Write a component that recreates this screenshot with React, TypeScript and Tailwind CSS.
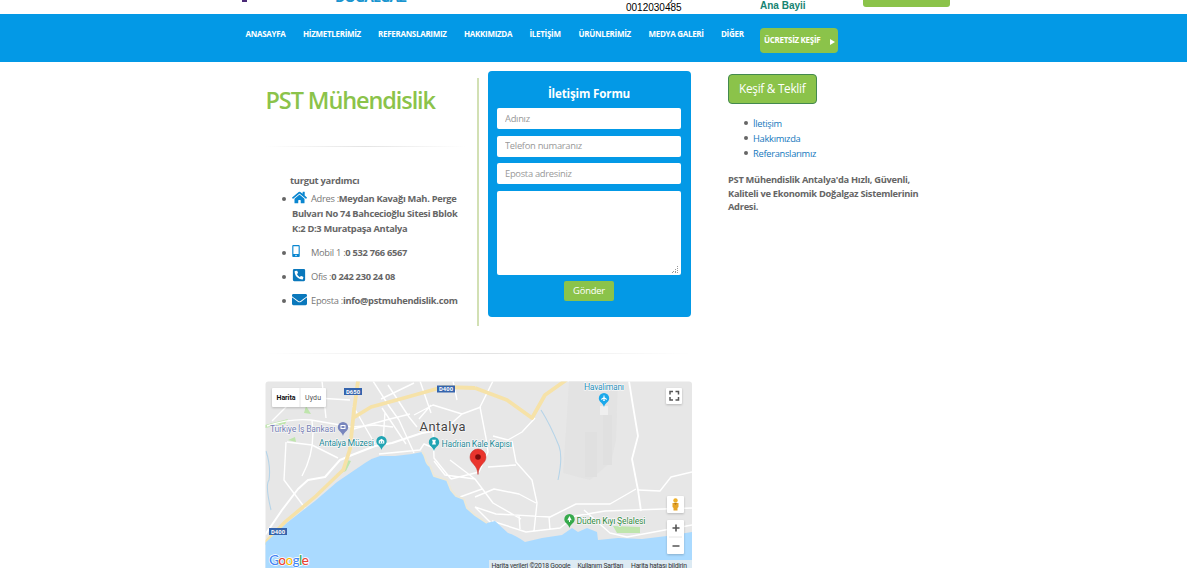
import React from "react";
import { FaHome, FaMobileAlt, FaPhoneSquareAlt, FaEnvelope } from "react-icons/fa";

const navItems = [
  { label: "ANASAYFA", cls: "w-[57.5px]" },
  { label: "HİZMETLERİMİZ", cls: "w-[75px]" },
  { label: "REFERANSLARIMIZ", cls: "w-[86px]" },
  { label: "HAKKIMIZDA", cls: "w-[65.5px]" },
  { label: "İLETİŞİM", cls: "w-[49px]" },
  { label: "ÜRÜNLERİMİZ", cls: "w-[70px]" },
  { label: "MEDYA GALERİ", cls: "w-[72.5px]" },
  { label: "DİĞER", cls: "w-[39px]" },
];

function TopStrip() {
  return (
    <div className="relative h-[14px] overflow-hidden bg-white">
      <div className="absolute left-[242px] top-0 h-[2px] w-[5px] bg-[#4b2a77]" />
      <div className="absolute left-[335px] top-[-11px] text-[14px] font-bold leading-[16px] tracking-[-0.8px] text-[#1a95cf]">
        DOĞALGAZ
      </div>
      <div className="absolute left-[598px] top-[-11px] font-['Liberation_Sans',sans-serif] text-[10px] leading-[12px] text-[#666]">(</div>
      <div className="absolute left-[669px] top-[-8px] font-['Liberation_Sans',sans-serif] text-[10px] leading-[12px] text-[#222]">y</div>
      <div className="absolute left-[626px] top-[1px] font-['Liberation_Sans',sans-serif] text-[10px] leading-[13px] text-black">
        0012030485
      </div>
      <div className="absolute left-[760px] top-[-1px] font-['Liberation_Sans',sans-serif] text-[10px] font-bold leading-[13px] text-[#168472]">
        Ana Bayii
      </div>
      <div className="absolute left-[863px] top-[-10px] h-[17px] w-[87px] rounded-[3px] bg-[#8bc34a]" />
    </div>
  );
}

function NavBar() {
  return (
    <nav className="flex h-[48px] w-[1187px] items-start bg-[#0399e6] pl-[245.5px] text-[8px] font-bold tracking-[-0.3px] text-white">
      {navItems.map((n) => (
        <a key={n.label} className={"shrink-0 whitespace-nowrap pt-[14px] leading-[12px] " + n.cls}>
          {n.label}
        </a>
      ))}
      <a className="mt-[14px] flex h-[24.5px] w-[78px] shrink-0 items-center rounded-[4px] bg-[#8bc34a] pl-[4px]">
        <span className="w-[65.5px] whitespace-nowrap">ÜCRETSİZ KEŞİF</span>
        <svg width="5" height="6" viewBox="0 0 5 6" className="mt-[3px] fill-white">
          <path d="M0 0 5 3 0 6Z" />
        </svg>
      </a>
    </nav>
  );
}

function Row({ children }: { children: React.ReactNode }) {
  return (
    <li className="relative mb-[9px] min-h-[15px] whitespace-nowrap leading-[15px]">
      <span className="absolute left-[-10px] top-[6px] size-[4px] rounded-full bg-[#666]" />
      {children}
    </li>
  );
}

function Contact() {
  return (
    <section className="mt-[16px] h-[248px] w-[214px] shrink-0 border-r-2 border-[#d2e0b4]">
      <h1 className="pl-[0.5px] pt-[6px] text-[23.5px] font-semibold leading-[32px] tracking-[-1.1px] text-[#8bc34a]">
        <span className="whitespace-nowrap">PST Mühendislik</span>
      </h1>
      <div className="mt-[29.5px] h-px w-[200px] bg-linear-to-r from-transparent via-[#e4e4e4] to-transparent" />
      <div className="ml-[25px] mt-[27.5px] text-[9.4px] font-bold leading-[14px] tracking-[-0.27px] text-[#666]">turgut yardımcı</div>
      <ul className="ml-[27px] mt-[3px] text-[9.3px] tracking-[-0.29px] text-[#777]">
        <Row>
          <FaHome className="mr-[4px] mt-[-5px] inline-block size-[15px] text-[#0a86d0]" />
          Adres :<b className="text-[#666]">Meydan Kavağı Mah. Perge<br />Bulvarı No 74 Bahcecioğlu Sitesi Bblok<br />K:2 D:3 Muratpaşa Antalya</b>
        </Row>
        <Row>
          <FaMobileAlt className="ml-[-2px] mr-[9px] mt-[-6px] inline-block size-[12px] text-[#0a86d0]" />
          Mobil 1 :<b className="text-[#666]">0 532 766 6567</b>
        </Row>
        <Row>
          <FaPhoneSquareAlt className="mr-[5px] mt-[-5px] inline-block size-[14px] text-[#0a78bc]" />
          Ofis :<b className="text-[#666]">0 242 230 24 08</b>
        </Row>
        <Row>
          <FaEnvelope className="mr-[4px] mt-[-5px] inline-block size-[15px] text-[#0a78bc]" />
          Eposta :<b className="text-[#666]">info@pstmuhendislik.com</b>
        </Row>
      </ul>
    </section>
  );
}

function ContactForm() {
  const field =
    "mb-[6.5px] block h-[21px] w-full rounded-[2px] bg-white px-[8px] pb-px text-[9.4px] tracking-[-0.3px] placeholder:text-[#999] outline-none";
  return (
    <form className="ml-[8.5px] mt-[9px] h-[246px] w-[203px] shrink-0 rounded-[4px] bg-[#0399e6] px-[9.5px]">
      <h2 className="mb-[6px] pt-[15px] text-center text-[11.6px] font-bold leading-[16px] tracking-[-0.15px] text-white">İletişim Formu</h2>
      <input className={field} placeholder="Adınız" />
      <input className={field} placeholder="Telefon numaranız" />
      <input className={field} placeholder="Eposta adresiniz" />
      <div className="flex h-[84px] items-end justify-end rounded-[2px] bg-white p-[2px]">
        <svg width="7" height="7" viewBox="0 0 7 7" className="fill-[#999]">
          <path d="M5 0h1v1H5zM5 2h1v1H5zM3 3h1v1H3zM5 4h1v1H5zM3 5h1v1H3zM1 5h1v1H1zM5 6h1v1H5zM3 6h1v1H3zM0 6h1v1H0z" />
        </svg>
      </div>
      <button type="button" className="mx-auto mt-[6.5px] block h-[20px] w-[50px] rounded-[2px] bg-[#8bc34a] text-[9.4px] tracking-[-0.2px] text-white">
        Gönder
      </button>
    </form>
  );
}

const coast =
  "M265 543 288 522 315 501 337 482 365 463Q372 458 380 456L395 456 412 454 422 452C427 456 424 463 430 466L434 476 447 480 451 490 456 496 464 499 467 508 475 515 487 523 495 521 508 533Q515 535 525 542L542 538 562 535 572 528 578 532 587 528 597 532 598 540 618 538 642 539 667 536 692 532V568H265Z";

function Badge({ x, y, t }: { x: number; y: number; t: string }) {
  return (
    <g>
      <rect x={x} y={y} width="18" height="7" fill="#3564ad" />
      <text x={x + 9} y={y + 5.7} fontSize="5.8" fontWeight="700" fill="#fff" textAnchor="middle" textLength="14">
        {t}
      </text>
    </g>
  );
}

function Pin({ x, y, c, kind }: { x: number; y: number; c: string; kind: string }) {
  return (
    <g transform={`translate(${x} ${y})`}>
      <path d="M0 8C-.8 4-5.2 3-5.2-.8A5.2 5.2 0 0 1 5.2-.8C5.2 3 .8 4 0 8Z" fill={c} />
      {kind === "museum" && <path d="M-2.8-1.3 0-3.3 2.8-1.3V1.5H-2.8ZM-1.6-.7V1H-.8V-.7ZM.8-.7V1h.8V-.7Z" fill="#fff" fillRule="evenodd" />}
      {kind === "gate" && <path d="M-2-3.2H2L1.2-1 2 1.5H-2L-1.2-1Z" fill="#fff" />}
      {kind === "bank" && <path d="M-2.5-3H2.5V1H-2.5ZM-1.5-2V0H1.5V-2Z" fill="#fff" fillRule="evenodd" />}
      {kind === "tree" && <path d="M0-4 2.2.3H.5V2H-.5V.3H-2.2Z" fill="#fff" />}
      {kind === "plane" && <path d="M-.5-3.5H.5V-1.8L3 0V.7L.5 0V1.2L1.3 2H-1.3L-.5 1.2V0L-3 .7V0L-.5-1.8Z" fill="#fff" />}
    </g>
  );
}

function MapPanel() {
  return (
    <svg
      width="427"
      height="187"
      viewBox="265 381 427 187"
      className="block font-['Roboto',sans-serif]"
    >
      <defs>
        <clipPath id="frame"><rect x="265.5" y="381.5" width="426.5" height="195" rx="3" /></clipPath>
      </defs>
      <g clipPath="url(#frame)">
        <rect x="265" y="381" width="427" height="187" fill="#e7e7e7" />
        <path d="M569 381H618L616 440 611 462 590 480 563 473 566 430Z" fill="#e3e3e3" />
        <path d="M585 432h12v45h-12zM603 415h9v50h-9z" fill="#e0e0e0" />
        <path d="M600 406h8v9h-8z" fill="#efefef" />
        <g fill="#bfe5ad">
          <path d="M613 526 640 527V533H617ZM341 473 347 460 351 461 346 471ZM288 440 295 437 296 442ZM306 406 311 414 304 413ZM265 425 288 419 285 424 265 428Z" />
        </g>
        <path d="M266 451Q271 466 269 480 265 485 271 510M541 410Q550 424 559 446 563 457 558 480" fill="none" stroke="#b6d4e8" strokeWidth="1.1" />
        <g fill="none" stroke="#fff" strokeWidth="1.4" strokeLinejoin="round">
          <path d="M267 426Q291 418 311 420L352 427 375 425 393 427M294 395 291 402 272 421M286 442 284 480 305 508M287 442 312 445 338 458M312 421Q316 450 302 476M317 398 350 400M322 381 326 418M353 406 375 444" />
          <path d="M265 535 282 510 298 489 308 480 325 477 340 460 352 455 375 446 392 443 422 433 434 431" strokeWidth="2" />
          <path d="M373 381 389 406 399 420 414 453M388 385 409 417 417 427M382 408 406 444M350 430 386 420 410 414M385 412 383 442M420 381 431 413M453 381 457 400M381 399 414 383M414 415 433 405 462 414M379 454 420 450 424 444 434 448M431 405 419 419M481 407 462 414 444 430" />
          <path d="M433 431 434 458 451 479M434 461 445 475 475 479M493 381 480 407 486 438 488 452 479 472 451 479M535 418 522 432 508 440 493 436M512 441 516 462 532 480 537 503 534 531M488 467 516 465M475 479 493 503 521 519M475 497 494 489 519 494 536 503M475 507 496 514 550 517 576 504 610 504 636 489M638 490 660 491 671 477 692 472M492 521 526 532 560 528 575 516 605 511 692 508M519 515 520 529M549 517 550 530M584 510 610 533 627 537 692 525M450 460 475 479M460 497 482 489M475 507 497 529" />
          <path d="M629 381 633 406 638 436 632 459 638 490 641 511" strokeWidth="1.8" />
        </g>
        <path d="M358 381 354 410 350 449 343 471M353 418 371 407 404 398 443 387 475 388M475 388 507 400 532 418 545 395 569 378" fill="none" stroke="#f6e2a8" strokeWidth="3.8" strokeLinejoin="round" />
        <path d="M343 470 316 496 285 522 264 544" fill="none" stroke="#f6e2a8" strokeWidth="3.5" />
        <path d={coast} fill="#aadaff" />
        <path d="M422 452C427 456 424 463 430 466L434 476 447 480 451 490 456 496 464 499 467 508 475 515 487 523" fill="none" stroke="#ece8d8" strokeWidth="2" />
      </g>

      <Badge x={344} y={388} t="D650" />
      <Badge x={437} y={385.5} t="D400" />
      <Badge x={269} y={528} t="D400" />

      <g stroke="#f7f7f7" strokeWidth="1.5" paintOrder="stroke" strokeLinejoin="round">
        <text x="270" y="431.5" fontSize="8.8" fill="#7580b4" textLength="65.5">Türkiye İş Bankası</text>
        <text x="319" y="446" fontSize="8.8" fill="#258b98" textLength="55">Antalya Müzesi</text>
        <text x="419.5" y="430.5" fontSize="12.8" fill="#444" textLength="46">Antalya</text>
        <text x="441.5" y="447" fontSize="8.8" fill="#258b98" textLength="70.5">Hadrian Kale Kapısı</text>
        <text x="584" y="390" fontSize="8.8" fill="#288fba" textLength="40">Havalimanı</text>
        <text x="576.5" y="524" fontSize="8.8" fill="#328b43" textLength="69">Düden Kıyı Şelalesi</text>
      </g>
      <Pin x={343} y={428} c="#7986bd" kind="bank" />
      <Pin x={381.5} y={442} c="#21a4b3" kind="museum" />
      <Pin x={434} y={443} c="#21a4b3" kind="gate" />
      <Pin x={604} y={399} c="#1ba9eb" kind="plane" />
      <Pin x={569.5} y={520} c="#36aa4c" kind="tree" />

      <path d="M478 474.5C477.5 464 470 464 470 457A8 8 0 0 1 486 457C486 464 478.5 464 478 474.5Z" fill="#ea352d" stroke="#bd302b" strokeWidth=".5" />
      <circle cx="478" cy="457" r="2.8" fill="#7d0c0b" />

      <g className="drop-shadow-[0_1px_1px_rgba(0,0,0,0.2)]" fill="#fff">
        <rect x="272" y="388" width="54" height="19" rx="1" />
        <rect x="666" y="388" width="16" height="16" rx="1" />
        <rect x="667" y="496" width="17" height="17" rx="1" />
        <rect x="667" y="520" width="17" height="34" rx="1" />
      </g>
      <path d="M300 388v19M669 537h13" stroke="#e6e6e6" strokeWidth="1" />
      <text x="276.5" y="400" fontSize="7" fontWeight="700" fill="#111" textLength="19">Harita</text>
      <text x="305" y="400" fontSize="7" fill="#555" textLength="16">Uydu</text>
      <path d="M670 394.5V391.5H673M675.5 391.5H678.5V394.5M678.5 397V400H675.5M673 400H670V397" fill="none" stroke="#555" strokeWidth="1.5" />
      <path d="M672.5 528H679.5M676 524.5V531.5M672.5 546H679.5" stroke="#555" strokeWidth="1.6" />
      <circle cx="675.5" cy="500.5" r="2.2" fill="#edb02b" />
      <path d="M672.5 503H678.5V507L677.5 508V510.5H673.5V508L672.5 507Z" fill="#e5a427" />
      <path d="M674 503H677L675.5 505Z" fill="#b87817" />

      <text x="269" y="565" fontSize="14" fontWeight="500" textLength="40" stroke="#fff" strokeWidth="1.5" paintOrder="stroke" className="font-['Lato',sans-serif]">
        <tspan fill="#4285f4">G</tspan><tspan fill="#ea4335">o</tspan><tspan fill="#fbbc05">o</tspan><tspan fill="#4285f4">g</tspan><tspan fill="#34a853">l</tspan><tspan fill="#ea4335">e</tspan>
      </text>
      <rect x="489" y="560" width="203" height="8" fill="#e8edf0" fillOpacity=".8" />
      <g fontSize="6.8" fill="#333">
        <text x="491.5" y="568" textLength="79">Harita verileri ©2018 Google</text>
        <text x="577.5" y="568" textLength="46">Kullanım Şartları</text>
        <text x="631" y="568" textLength="56">Harita hatası bildirin</text>
      </g>
    </svg>
  );
}

function Sidebar() {
  return (
    <aside className="ml-[36px] mt-[12px] w-[210px] text-[9.3px] tracking-[-0.29px]">
      <a className="flex h-[29.5px] w-[88.5px] items-center justify-center rounded-[4px] border border-[#43894f] bg-[#8bc34a] text-[11.8px] text-white">
        Keşif &amp; Teklif
      </a>
      <ul className="ml-[25px] mt-[12px] text-[#1478bd]">
        {["İletişim", "Hakkımızda", "Referanslarımız"].map((t) => (
          <li key={t} className="flex h-[15px] items-center leading-[15px]">
            <span className="ml-[-9px] mr-[5px] size-[4px] rounded-full bg-[#666]" />
            {t}
          </li>
        ))}
      </ul>
      <p className="mt-[12.5px] whitespace-nowrap font-bold leading-[13.7px] text-[#666]">
        PST Mühendislik Antalya'da Hızlı, Güvenli,<br />Kaliteli ve Ekonomik Doğalgaz Sistemlerinin<br />Adresi.
      </p>
    </aside>
  );
}

export default function App() {
  return (
    <div className="h-[568px] w-[1200px] overflow-hidden bg-white font-['Open_Sans',sans-serif]">
      <TopStrip />
      <NavBar />
      <main className="flex items-start pl-[265px]">
        <div className="w-[427px]">
          <div className="flex h-[264px]">
            <Contact />
            <ContactForm />
          </div>
          <div className="mb-[27px] mt-[27px] h-px bg-linear-to-r from-transparent via-[#e2e2e2] to-transparent" />
          <MapPanel />
        </div>
        <Sidebar />
      </main>
    </div>
  );
}
